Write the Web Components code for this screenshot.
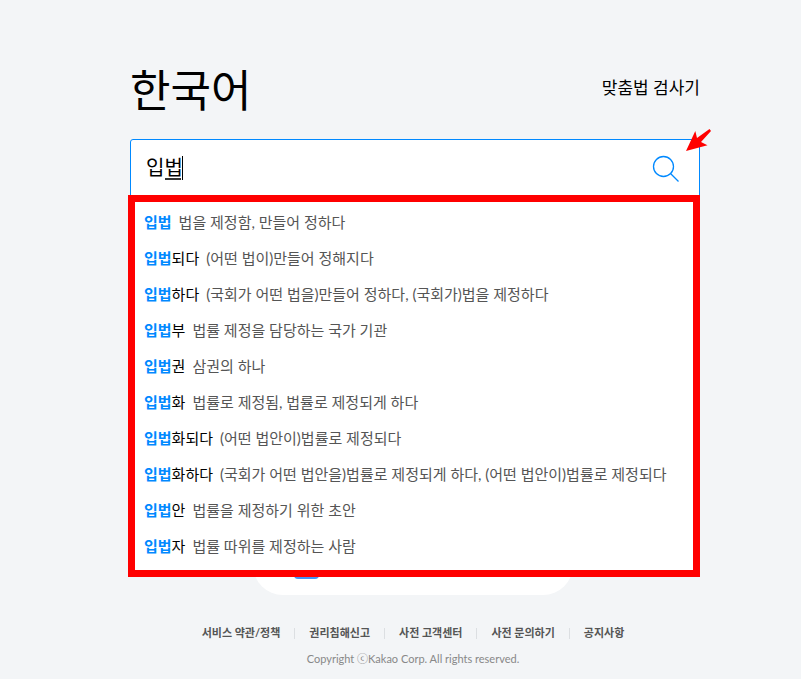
<!DOCTYPE html>
<html lang="ko">
<head>
<meta charset="utf-8">
<meta name="viewport" content="width=device-width, initial-scale=1">
<title>한국어 사전</title>
<style>
    :root {
        --accent: #0089ff;
        --mark: #ff0000;
        --page-bg: #f3f5f7;
    }
    body {
        margin: 0;
        background: var(--page-bg);
        color: #000;
        font-family: Lato, "Noto Sans CJK KR", sans-serif;
    }
</style>
</head>
<body>
<dict-page>
    <dict-header slot="header" name="한국어" link="맞춤법 검사기"></dict-header>
    <search-box value="입법">
        <suggest-list></suggest-list>
    </search-box>
    <quick-card></quick-card>
    <page-footer slot="footer">Copyright ⓒKakao Corp. All rights reserved.</page-footer>
</dict-page>

<script>
const QUERY = '입법';

const SUGGESTIONS = [
    ['입법', '법을 제정함, 만들어 정하다'],
    ['입법되다', '(어떤 법이)만들어 정해지다'],
    ['입법하다', '(국회가 어떤 법을)만들어 정하다, (국회가)법을 제정하다'],
    ['입법부', '법률 제정을 담당하는 국가 기관'],
    ['입법권', '삼권의 하나'],
    ['입법화', '법률로 제정됨, 법률로 제정되게 하다'],
    ['입법화되다', '(어떤 법안이)법률로 제정되다'],
    ['입법화하다', '(국회가 어떤 법안을)법률로 제정되게 하다, (어떤 법안이)법률로 제정되다'],
    ['입법안', '법률을 제정하기 위한 초안'],
    ['입법자', '법률 따위를 제정하는 사람']
];

const FOOTER_LINKS = ['서비스 약관/정책', '권리침해신고', '사전 고객센터', '사전 문의하기', '공지사항'];

function render(host, html) {
    const template = document.createElement('template');
    template.innerHTML = html;
    host.attachShadow({ mode: 'open' }).appendChild(template.content.cloneNode(true));
}

class DictPage extends HTMLElement {
    constructor() {
        super();
        render(this, `
            <style>
                :host {
                    display: flex;
                    flex-direction: column;
                    box-sizing: border-box;
                    min-height: 100vh;
                    padding: 60px 101px 12px 130px;
                }
                main {
                    display: flex;
                    flex-direction: column;
                }
            </style>
            <slot name="header"></slot>
            <main><slot></slot></main>
            <slot name="footer"></slot>
        `);
    }
}

class DictHeader extends HTMLElement {
    constructor() {
        super();
        render(this, `
            <style>
                :host {
                    display: block;
                }
                header {
                    display: flex;
                    align-items: center;
                    justify-content: space-between;
                    padding-bottom: 23px;
                }
                h1 {
                    margin: 0;
                    font-family: "Noto Sans CJK KR", sans-serif;
                    font-size: 44px;
                    font-weight: 400;
                    line-height: 56px;
                }
                a {
                    color: inherit;
                    font-size: 17px;
                    line-height: 24px;
                    text-decoration: none;
                }
            </style>
            <header>
                <h1></h1>
                <a href="#"></a>
            </header>
        `);
        this.shadowRoot.querySelector('h1').textContent = this.getAttribute('name');
        this.shadowRoot.querySelector('a').textContent = this.getAttribute('link');
    }
}

class SearchBox extends HTMLElement {
    constructor() {
        super();
        render(this, `
            <style>
                :host {
                    display: block;
                    position: relative;
                }
                form {
                    display: flex;
                    align-items: center;
                    height: 58px;
                    padding: 0 16px 0 15px;
                    border: 1px solid var(--accent);
                    border-radius: 3px 3px 0 0;
                    background: #fff;
                }
                .field {
                    position: relative;
                    display: flex;
                    flex: 1;
                }
                input {
                    flex: 1;
                    min-width: 0;
                    padding: 0 0 4px;
                    border: 0;
                    outline: 0;
                    background: none;
                    color: #000;
                    font: inherit;
                    font-size: 20px;
                    line-height: 28px;
                }
                /* syllable being composed, with the caret after it */
                .compose {
                    position: absolute;
                    left: 19px;
                    top: 3px;
                    width: 16px;
                    height: 22px;
                    border-bottom: 2px solid #333;
                }
                .compose::after {
                    content: "";
                    position: absolute;
                    left: 17px;
                    top: 0;
                    width: 1px;
                    height: 24px;
                    background: #000;
                }
                button {
                    display: flex;
                    padding: 0;
                    border: 0;
                    background: none;
                    cursor: pointer;
                }
                .arrow {
                    position: absolute;
                    right: -12px;
                    top: -10px;
                }
                ::slotted(suggest-list) {
                    position: absolute;
                    top: 56px;
                    left: -2px;
                    right: 0;
                }
            </style>
            <form role="search">
                <div class="field">
                    <input type="text" aria-label="검색어" autocomplete="off">
                    <span class="compose" aria-hidden="true"></span>
                </div>
                <button type="button" aria-label="검색">
                    <svg width="34" height="34" viewBox="0 0 34 34" fill="none" stroke="var(--accent)" stroke-width="1.3">
                        <circle cx="14.500" cy="14.500" r="10"/>
                        <path d="M21.500 21.500L29.500 29.500"/>
                    </svg>
                </button>
            </form>
            <svg class="arrow" width="26" height="24" viewBox="0 0 26 24" aria-hidden="true">
                <path d="M0 22L9.300 2L11 9L23.500 0L25 2L15 13L21.500 16.200Z" fill="var(--mark)"/>
            </svg>
            <slot></slot>
        `);
        this.shadowRoot.querySelector('input').value = this.getAttribute('value');
    }
}

class SuggestList extends HTMLElement {
    constructor() {
        super();
        render(this, `
            <style>
                :host {
                    display: block;
                    z-index: 1;
                    box-sizing: border-box;
                    border: 7px solid var(--mark);
                    background: #fff;
                }
                ul {
                    margin: 0;
                    padding: 2px 9px 6px;
                    list-style: none;
                }
            </style>
            <ul></ul>
        `);
        const ul = this.shadowRoot.querySelector('ul');
        SUGGESTIONS.forEach(([word, meaning]) => {
            const li = document.createElement('li');
            const item = document.createElement('suggest-item');
            item.setAttribute('word', word);
            item.textContent = meaning;
            li.appendChild(item);
            ul.appendChild(li);
        });
    }
}

class SuggestItem extends HTMLElement {
    constructor() {
        super();
        render(this, `
            <style>
                :host {
                    display: block;
                }
                a {
                    display: flex;
                    gap: 7px;
                    color: #000;
                    font-size: 15px;
                    line-height: 36px;
                    text-decoration: none;
                    white-space: nowrap;
                }
                b {
                    color: var(--accent);
                    font-weight: 700;
                }
                .meaning {
                    color: #555;
                }
            </style>
            <a href="#">
                <span><b></b><span class="rest"></span></span>
                <span class="meaning"><slot></slot></span>
            </a>
        `);
    }

    connectedCallback() {
        const word = this.getAttribute('word');
        this.shadowRoot.querySelector('b').textContent = QUERY;
        this.shadowRoot.querySelector('.rest').textContent = word.slice(QUERY.length);
    }
}

// card under the suggestions, only its lower edge shows
class QuickCard extends HTMLElement {
    constructor() {
        super();
        render(this, `
            <style>
                :host {
                    display: flex;
                    align-items: flex-end;
                    align-self: center;
                    box-sizing: border-box;
                    width: 56%;
                    height: 60px;
                    margin: 336px 4px 0 0;
                    padding: 0 41px 16px;
                    border-radius: 30px;
                    background: #fff;
                }
                .icon {
                    width: 25px;
                    height: 26px;
                    border-radius: 4px;
                    background: #4294f7;
                }
            </style>
            <span class="icon"></span>
        `);
    }
}

class PageFooter extends HTMLElement {
    constructor() {
        super();
        render(this, `
            <style>
                :host {
                    display: block;
                    padding: 29px 4px 0 0;
                    text-align: center;
                }
                ul {
                    display: flex;
                    justify-content: center;
                    margin: 0;
                    padding: 0;
                    list-style: none;
                }
                li {
                    display: flex;
                    align-items: center;
                }
                li + li::before {
                    content: "";
                    width: 1px;
                    height: 11px;
                    margin: 0 14px;
                    background: #dcdfe2;
                }
                a {
                    color: #555;
                    font-size: 11px;
                    font-weight: 700;
                    line-height: 18px;
                    text-decoration: none;
                }
                small {
                    display: block;
                    margin-top: 8px;
                    color: #888;
                    font-size: 11px;
                    line-height: 18px;
                }
            </style>
            <footer>
                <ul></ul>
                <small><slot></slot></small>
            </footer>
        `);
        const ul = this.shadowRoot.querySelector('ul');
        FOOTER_LINKS.forEach(text => {
            const li = document.createElement('li');
            const a = document.createElement('a');
            a.href = '#';
            a.textContent = text;
            li.appendChild(a);
            ul.appendChild(li);
        });
    }
}

customElements.define('dict-page', DictPage);
customElements.define('dict-header', DictHeader);
customElements.define('search-box', SearchBox);
customElements.define('suggest-item', SuggestItem);
customElements.define('suggest-list', SuggestList);
customElements.define('quick-card', QuickCard);
customElements.define('page-footer', PageFooter);
</script>
</body>
</html>
